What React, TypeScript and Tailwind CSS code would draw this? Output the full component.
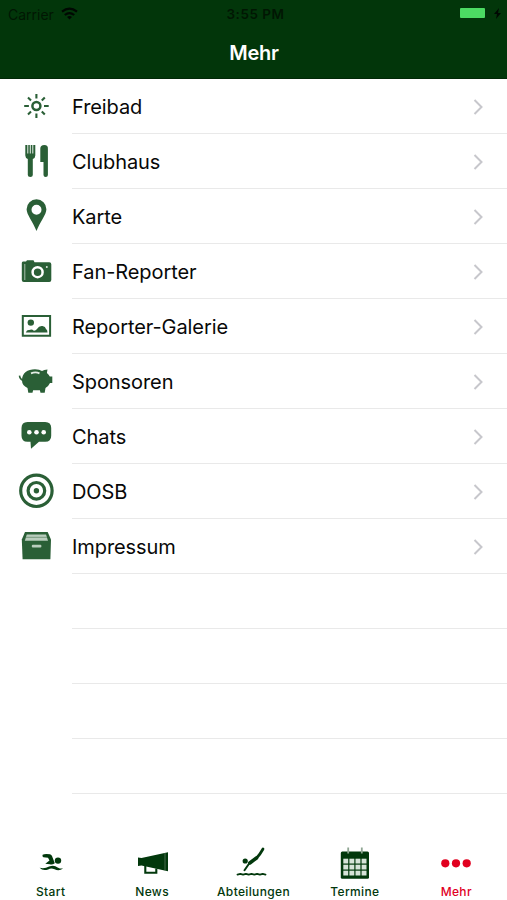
import type { ReactNode } from "react";

const GREEN = "#2a5f36";

function Icon({ children }: { children: ReactNode }) {
  return (
    <svg viewBox="0 0 44 44" className="mb-px ml-[14px] h-11 w-11 shrink-0" fill={GREEN}>
      {children}
    </svg>
  );
}

// Each drawing occupies the full 44px icon slot, centred at (22, 22).
const rows: { label: string; icon: ReactNode }[] = [
  {
    label: "Freibad",
    icon: (
      <g fill="none" stroke={GREEN}>
        <circle cx="22.400" cy="22" r="4" strokeWidth="2.500" />
        <path strokeWidth="2.100" d="M22.400 10v4.500M22.400 29.500V34M10.200 22h4.700M30 22h4.700M14 13.600l3 3M27.800 27.400l3 3M14 30.400l3-3M27.800 16.600l3-3" />
      </g>
    ),
  },
  {
    label: "Clubhaus",
    icon: (
      <>
        <path d="M11.300 6h10v10.500q0 2.500-2.500 3.500V36q0 2-2.500 2t-2.500-2V20q-2.500-1-2.500-3.500Z" />
        <path d="M13.800 5.500v9M16.300 5.500v9M18.800 5.500v9" stroke="#fff" strokeWidth=".9" />
        <path d="M26.300 9.500q0-3.500 4-3.500t3.600 4V36q0 2-2.200 2t-2.200-2V23h-3.200Z" />
      </>
    ),
  },
  {
    label: "Karte",
    icon: <path fillRule="evenodd" d="M22.500 5.300A9.900 9.900 0 0 1 32.400 15.200C32.400 20.500 26 28 22.500 37C19 28 12.600 20.500 12.600 15.200A9.900 9.900 0 0 1 22.500 5.300ZM22.500 10.800a5 5 0 1 0 0 10a5 5 0 1 0 0-10Z" />,
  },
  {
    label: "Fan-Reporter",
    icon: (
      <>
        <path d="M9 12.500q-1.200.3-1.200 1.500v17q0 2 2 2h25.500q2 0 2-2V15.200q0-2-2-2H20.500l-1-2h-6.500l-1 1.300Z" />
        <path d="M10.800 15v16" stroke="#b5c8b9" strokeWidth=".9" />
        <circle cx="23.600" cy="23.200" r="5" fill={GREEN} stroke="#fff" strokeWidth="2.500" />
        <circle cx="32.800" cy="18" r="1" fill="#dce7de" />
      </>
    ),
  },
  {
    label: "Reporter-Galerie",
    icon: (
      <>
        <path d="M8.800 12h27.300v19.700H8.800Z" fill="#fff" stroke={GREEN} strokeWidth="2" />
        <circle cx="16.800" cy="18.600" r="3.200" />
        <path d="M11.800 28.400q1-2.600 3.500-2.300q2.500-1.500 4.500.6q1.700.3 3.200-1.700q2-3.500 5.500-3q3 .3 3.500 3q1.500 1 1.500 3.400Z" />
      </>
    ),
  },
  {
    label: "Sponsoren",
    icon: (
      <>
        <path d="M8 21.500C8 14 13.500 10.300 21 10.300q4.500 0 7 1.700q2-1.500 5.500-1.600l-.6 3.600q2 1.500 2.900 3.500H38.300v6.500H36q-1.500 3.300-4.500 5l-.8 4.700h-4.200l-.6-2.500h-6.800l-.6 2.500h-4.200l-.8-4.700Q8 26.500 8 21.500Z" />
        <path d="M9.500 21.500q-3.600-1-4-4.800" fill="none" stroke={GREEN} strokeWidth="1.600" />
        <path d="M17 14.400q4.500-1.900 8.500 0" fill="none" stroke="#e5eee7" strokeWidth="1.800" />
      </>
    ),
  },
  {
    label: "Chats",
    icon: (
      <>
        <path d="M13.500 8h17.700q6 0 6 6v7.700q0 6-6 6H25l-8 7l-.5-7h-3q-6 0-6-6V14q0-6 6-6Z" />
        <g fill="#fff"><circle cx="15.300" cy="18.200" r="2.300" /><circle cx="22.500" cy="18.200" r="2.300" /><circle cx="29.700" cy="18.200" r="2.300" /></g>
      </>
    ),
  },
  {
    label: "DOSB",
    icon: (
      <>
        <g fill="none" stroke={GREEN} strokeWidth="3.200"><circle cx="22.400" cy="21.800" r="15.700" /><circle cx="22.400" cy="21.800" r="8.300" /></g>
        <circle cx="22.400" cy="21.800" r="2.700" />
      </>
    ),
  },
  {
    label: "Impressum",
    icon: (
      <>
        <path d="M11 8h22.700L37 15.500l-.6 19.800H8.600L7.800 15.500Z" />
        <path d="M12.800 10.500h19.200l2 6.200H10.800Z" fill="#b9cdbd" />
        <path d="M12 13.300h21" stroke="#6f9377" strokeWidth=".9" />
        <rect x="17.800" y="20.700" width="9.600" height="2.800" rx="1" fill="#b9cdbd" />
      </>
    ),
  },
];

const tabs: { label: string; icon: ReactNode }[] = [
  {
    label: "Start",
    icon: (
      <g fill="#02380c">
        <path d="M17.600 14.800q2-1.300 7.400-.5q1.500.4 2 1.800l2.800 7.200q-3 2-5 .9l-4.500-.4l4.200-3.300l-1.500-2.700l-4.600-.5q-1.500-.8-.8-2.500Z" />
        <circle cx="33" cy="20.600" r="3.200" />
        <path d="M14.600 27.800q5 1.300 9.500-1.300q5-2 8.500.9q2 1.300 5.500 1.200q-4.500 3.200-8.500.6q-3.500-1.500-6.500.2q-5 2-8.500-1.600Z" />
      </g>
    ),
  },
  {
    label: "News",
    icon: (
      <>
        <path d="m12 17.500 3.500.5L42 12.300v19L15.500 25.600l-3.500.4Z" fill="#02380c" />
        <path d="M19.300 26v6.700h11v-4.200" fill="none" stroke="#02380c" strokeWidth="2.100" />
        <path d="M39 13v17.500" stroke="#64836a" strokeWidth=".7" />
      </>
    ),
  },
  {
    label: "Abteilungen",
    icon: (
      <g fill="none" stroke="#02380c" strokeLinecap="round" strokeLinejoin="round">
        <path strokeWidth="2" d="M17.500 30.300 22 23.800" />
        <path strokeWidth="3.600" d="M22.800 23 29.500 18" />
        <path strokeWidth="2.700" d="M30 17.500q3-3 6-8.500" />
        <circle cx="18.200" cy="21" r="2.600" fill="#02380c" stroke="none" />
        <path strokeWidth="1.800" d="m10.500 34.600 2.800-.8 2.800.8 2.800-.8 2.800.8 2.800-.8 2.800.8 2.800-.8 2.800.8 2.800-.8 2.800.8" />
      </g>
    ),
  },
  {
    label: "Termine",
    icon: (
      <>
        <rect x="11.800" y="11.500" width="28.200" height="27.200" rx="1.500" fill="#02380c" />
        <path d="M19.200 7.500v6M32.800 7.500v6" stroke="#8fa693" strokeWidth="1.800" />
        <g fill="#d6e3d8">
          {[18.700, 24.700, 30.700].flatMap((y) =>
            [14.300, 20.400, 26.500, 32.600].map((x) => (
              <rect key={`${x}-${y}`} x={x} y={y} width="4.900" height="4.800" />
            )),
          )}
        </g>
      </>
    ),
  },
  {
    label: "Mehr",
    icon: <g fill="#e1001f"><circle cx="15.300" cy="23.300" r="4.100" /><circle cx="26" cy="23.300" r="4.100" /><circle cx="36.700" cy="23.300" r="4.100" /></g>,
  },
];

export default function App() {
  return (
    <div className="flex h-[900px] w-[507px] flex-col overflow-hidden bg-white font-[Inter,sans-serif]">
      <header className="h-[79px] shrink-0 border-b border-[#012807] bg-[#02360a]">
        <div className="grid h-7 grid-cols-3 items-center text-[#011603]">
          <div className="flex items-center gap-[7px] pl-2">
            <span className="text-[14px]">Carrier</span>
            <svg viewBox="0 0 17 13" className="mb-[2px] h-[13px] w-[17px]" fill="none" stroke="#000802" strokeWidth="2.200">
              <path d="M1 4.700q7.500-6 15 0M3.800 8q4.700-3.800 9.400 0" />
              <path d="m8.500 12.500-2.500-2.600q2.500-2 5 0Z" fill="#000802" stroke="none" />
            </svg>
          </div>
          <span className="pl-1 pt-px text-center text-[13.500px] font-semibold tracking-[0.500px]">3:55 PM</span>
          <div className="flex items-center justify-end gap-[9px] pr-[6px]">
            <div className="mb-[2px] h-[10px] w-[25px] rounded-[1px] bg-[#4cdb63]" />
            <svg viewBox="0 0 7 11" className="mb-px h-[11px] w-[7px]" fill="#000802"><path d="M5 0 0 6h3L2 11l5-6H4Z" /></svg>
          </div>
        </div>
        <h1 className="pl-px pt-[11px] text-center text-[20px] font-semibold leading-7 tracking-[-0.200px] text-white">Mehr</h1>
      </header>
      <main className="flex flex-1 flex-col">
        {rows.map((row) => (
          <div key={row.label} className="flex h-[55px] shrink-0 items-center">
            <Icon>{row.icon}</Icon>
            <div className="ml-[14px] flex h-full flex-1 items-center justify-between border-b border-[#e9e9e9] pr-[23px] pt-[2px] text-[20px] tracking-[-0.080px] text-[#080808]">
              <span>{row.label}</span>
              <svg viewBox="0 0 12 18" className="h-[18px] w-3" fill="none" stroke="#c7c7cc" strokeWidth="2">
                <path d="m2.500 2 7 7-7 7" />
              </svg>
            </div>
          </div>
        ))}
        {[0, 1, 2, 3].map((n) => (
          <div key={n} className="ml-[72px] h-[55px] shrink-0 border-b border-[#e9e9e9]" />
        ))}
      </main>
      <nav className="grid h-[60px] shrink-0 grid-cols-5">
        {tabs.map((tab) => (
          <div key={tab.label} className={tab.label === "Mehr" ? "flex flex-col items-center text-[#e1001f]" : "flex flex-col items-center text-[#02380c]"}>
            <svg viewBox="0 0 52 44" className="h-11 w-[52px] shrink-0">{tab.icon}</svg>
            <span className="text-[12px] font-medium leading-4 tracking-[0.350px]">{tab.label}</span>
          </div>
        ))}
      </nav>
    </div>
  );
}
